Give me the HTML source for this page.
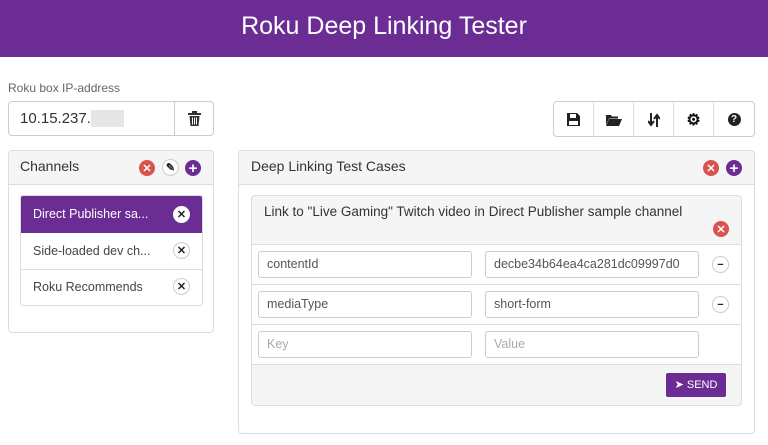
<!DOCTYPE html><html><head><style>
*{box-sizing:border-box;margin:0;padding:0}
body{width:768px;height:445px;background:#fff;font-family:"Liberation Sans",sans-serif;color:#444;position:relative;overflow:hidden}
.a{position:absolute}
.hdr{left:0;top:0;width:768px;height:57px;background:#6b2d94;color:#fff;font-size:25px;text-align:center;line-height:52px}
.box{border:1px solid #ddd;border-radius:4px;background:#fff}
.ph{background:#f5f5f5;border-bottom:1px solid #ddd}
.inp{border:1px solid #ccc;border-radius:3px;background:#fff;font-size:12.5px;color:#555;padding:0 8px;line-height:24px;overflow:hidden;white-space:nowrap}
.c{border-radius:50%;display:flex;align-items:center;justify-content:center;color:#fff;font-weight:bold}
.red{background:#d9534f;width:16px;height:16px;font-size:11px}
.pur{background:#6b2d94;width:16px;height:16px;font-size:15px}
.wc{background:#fff;border:1px solid #ccc;color:#222;width:17px;height:17px;font-size:11px}
.item{left:0;width:182px;height:37px;border-bottom:1px solid #ddd;font-size:12.5px;padding-left:12px;line-height:36px}
.tb{top:0;width:40px;height:35px;border-right:1px solid #ddd;display:flex;align-items:center;justify-content:center}
</style></head><body>
<div class="a hdr">Roku Deep Linking Tester</div>
<div class="a" style="left:8px;top:81px;font-size:12px;color:#666">Roku box IP-address</div>
<div class="a box" style="left:8px;top:101px;width:206px;height:35px;border-color:#ccc">
<div class="a" style="left:11px;top:8px;font-size:15px;color:#333">10.15.237.<span style="color:#bbb;background:#e6e6e6;">&nbsp;&nbsp;&nbsp;&nbsp;&nbsp;&nbsp;&nbsp;&nbsp;</span></div>
<div class="a" style="left:165px;top:0;width:1px;height:33px;background:#ccc"></div>
<svg class="a" style="left:179px;top:9px" width="13" height="15" viewBox="0 0 13 15"><rect x="0" y="2" width="13" height="2" fill="#333"/><rect x="4" y="0" width="5" height="2" fill="#333"/><path d="M1.5 5h10l-1 10h-8z" fill="#333"/><path d="M4.5 6.5v7M6.5 6.5v7M8.5 6.5v7" stroke="#fff" stroke-width="1"/></svg>
</div>
<div class="a box" style="left:553px;top:101px;width:202px;height:36px;border-color:#ccc">
<div class="a tb" style="left:0"><svg width="13" height="13" viewBox="0 0 13 13"><path d="M0 0h10l3 3v10H0z" fill="#222"/><rect x="3" y="1" width="6" height="4" fill="#fff"/><rect x="2" y="8" width="9" height="4" fill="#fff"/></svg></div>
<div class="a tb" style="left:40px"><svg width="16" height="12" viewBox="0 0 16 12"><path d="M0 1h5l1 1.5h6v2H3L0 11z" fill="#222"/><path d="M3 5h13l-3 7H0z" fill="#222"/></svg></div>
<div class="a tb" style="left:80px"><svg width="12" height="14" viewBox="0 0 12 14"><path d="M3 0v11M0 8l3 4 3-4M9 14V3M6 6l3-4 3 4" stroke="#222" stroke-width="2" fill="none"/></svg></div>
<div class="a tb" style="left:120px;font-size:16px;color:#111;font-weight:bold">⚙</div>
<div class="a tb" style="left:160px;border:none"><div class="c" style="width:13px;height:13px;background:#222;font-size:10px">?</div></div>
</div>
<!-- channels -->
<div class="a box" style="left:8px;top:150px;width:206px;height:183px">
<div class="a ph" style="left:0;top:0;width:204px;height:34px;border-radius:4px 4px 0 0"></div>
<div class="a" style="left:11px;top:7px;font-size:14px;color:#333">Channels</div>
<div class="a c red" style="left:130px;top:9px">✕</div>
<div class="a c wc" style="left:153px;top:8px">✎</div>
<div class="a c pur" style="left:176px;top:9px">+</div>
<div class="a" style="left:11px;top:44px;width:183px;height:111px;border:1px solid #ddd;border-radius:3px;overflow:hidden">
<div class="a item" style="top:0;background:#6b2d94;color:#fff;border-color:#6b2d94">Direct Publisher sa...</div>
<div class="a c" style="left:152px;top:10px;width:17px;height:17px;background:#fff;color:#222;font-size:11px">✕</div>
<div class="a item" style="top:37px">Side-loaded dev ch...</div>
<div class="a c wc" style="left:152px;top:46px">✕</div>
<div class="a item" style="top:73px;border:none">Roku Recommends</div>
<div class="a c wc" style="left:152px;top:82px">✕</div>
</div></div>
<!-- right -->
<div class="a box" style="left:238px;top:150px;width:517px;height:284px">
<div class="a ph" style="left:0;top:0;width:515px;height:34px;border-radius:4px 4px 0 0"></div>
<div class="a" style="left:12px;top:7px;font-size:14px;color:#333">Deep Linking Test Cases</div>
<div class="a c red" style="left:464px;top:9px">✕</div>
<div class="a c pur" style="left:487px;top:9px">+</div>
<div class="a box" style="left:12px;top:44px;width:491px;height:211px;background:#f5f5f5">
<div class="a" style="left:0;top:48px;width:489px;height:121px;background:#fff;border-top:1px solid #ddd;border-bottom:1px solid #ddd"></div>
<div class="a" style="left:0;top:88px;width:489px;height:1px;background:#ddd"></div>
<div class="a" style="left:0;top:128px;width:489px;height:1px;background:#ddd"></div>
<div class="a" style="left:12px;top:8px;font-size:13.5px;color:#333">Link to "Live Gaming" Twitch video in Direct Publisher sample channel</div>
<div class="a c red" style="left:461px;top:25px">✕</div>
<div class="a inp" style="left:6px;top:55px;width:214px;height:27px">contentId</div>
<div class="a inp" style="left:233px;top:55px;width:214px;height:27px">decbe34b64ea4ca281dc09997d0</div>
<div class="a c wc" style="left:460px;top:60px">−</div>
<div class="a inp" style="left:6px;top:95px;width:214px;height:27px">mediaType</div>
<div class="a inp" style="left:233px;top:95px;width:214px;height:27px">short-form</div>
<div class="a c wc" style="left:460px;top:100px">−</div>
<div class="a inp" style="left:6px;top:135px;width:214px;height:27px;color:#aaa">Key</div>
<div class="a inp" style="left:233px;top:135px;width:214px;height:27px;color:#aaa">Value</div>
<div class="a" style="left:414px;top:177px;width:60px;height:24px;background:#6b2d94;border-radius:2px;color:#fff;font-size:11px;line-height:24px;text-align:center">➤ SEND</div>
</div></div>
</body></html>
